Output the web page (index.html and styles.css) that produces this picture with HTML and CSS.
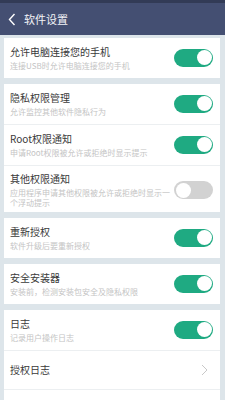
FILE: index.html
```html
<!DOCTYPE html>
<html lang="zh">
<head>
<meta charset="utf-8">
<link rel="stylesheet" href="styles.css">
</head>
<body>
<div class="header">
  <svg class="back" width="8" height="13" viewBox="0 0 8 13"><path d="M6.5 1 L1.5 6.5 L6.5 12" fill="none" stroke="#fff" stroke-width="1.4"/></svg>
  <span class="title">软件设置</span>
</div>
<div class="list">
  <div class="card">
    <div class="row">
      <div class="text"><div class="t">允许电脑连接您的手机</div><div class="s">连接USB时允许电脑连接您的手机</div></div>
      <div class="sw on"></div>
    </div>
  </div>
  <div class="card">
    <div class="row">
      <div class="text"><div class="t">隐私权限管理</div><div class="s">允许监控其他软件隐私行为</div></div>
      <div class="sw on"></div>
    </div>
    <div class="row">
      <div class="text"><div class="t">Root权限通知</div><div class="s">申请Root权限被允许或拒绝时显示提示</div></div>
      <div class="sw on"></div>
    </div>
    <div class="row tall">
      <div class="text"><div class="t">其他权限通知</div><div class="s">应用程序申请其他权限被允许或拒绝时显示一个浮动提示</div></div>
      <div class="sw"></div>
    </div>
  </div>
  <div class="card">
    <div class="row">
      <div class="text"><div class="t">重新授权</div><div class="s">软件升级后要重新授权</div></div>
      <div class="sw on"></div>
    </div>
  </div>
  <div class="card">
    <div class="row">
      <div class="text"><div class="t">安全安装器</div><div class="s">安装前，检测安装包安全及隐私权限</div></div>
      <div class="sw on"></div>
    </div>
  </div>
  <div class="card">
    <div class="row">
      <div class="text"><div class="t">日志</div><div class="s">记录用户操作日志</div></div>
      <div class="sw on"></div>
    </div>
    <div class="row single">
      <div class="text"><div class="t">授权日志</div></div>
      <svg class="chev" width="7" height="12" viewBox="0 0 7 12"><path d="M1 1 L6 6 L1 11" fill="none" stroke="#c8c8c8" stroke-width="1"/></svg>
    </div>
    <div class="row single"></div>
  </div>
</div>
</body>
</html>
```
FILE: styles.css
```css
html, body {
  margin: 0;
  padding: 0;
}
body {
  width: 225px;
  height: 400px;
  overflow: hidden;
  background: #dde5ea;
  font-family: "Noto Sans CJK SC", "Noto Sans", sans-serif;
}
.header {
  height: 32px;
  border-top: 3px solid #323b56;
  background: #444f72;
  display: flex;
  align-items: center;
  padding-left: 8px;
  box-sizing: content-box;
}
.back {
  display: block;
  margin-top: 1px;
}
.title {
  color: #f2f3f7;
  font-size: 11px;
  line-height: 14px;
  margin-left: 8px;
}
.list {
  padding: 3px 5px 0 4px;
  display: flex;
  flex-direction: column;
  gap: 6px;
}
.card {
  background: #fff;
}
.row {
  display: flex;
  align-items: center;
  justify-content: space-between;
  padding: 6px 7px 7px 6px;
  min-height: 27px;
  border-top: 1px solid #eceff1;
}
.row:first-child {
  border-top: none;
}
.row.tall {
  padding-bottom: 4px;
}
.row.single {
  min-height: 24px;
  padding-top: 7px;
}
.text {
  width: 162px;
}
.t {
  font-size: 10px;
  line-height: 14px;
  color: #3a3a3a;
}
.s {
  font-size: 8px;
  line-height: 10px;
  margin-top: 2px;
  color: #c4c4c4;
}
.sw {
  width: 39px;
  height: 18px;
  border-radius: 9px;
  background: #d2d2d2;
  position: relative;
  flex: none;
}
.sw::after {
  content: "";
  position: absolute;
  top: 1.5px;
  left: 1.5px;
  width: 15px;
  height: 15px;
  border-radius: 50%;
  background: #fff;
}
.sw.on {
  background: #1faa82;
}
.sw.on::after {
  left: auto;
  right: 1.5px;
}
.chev {
  display: block;
  margin-right: 5px;
}
```
